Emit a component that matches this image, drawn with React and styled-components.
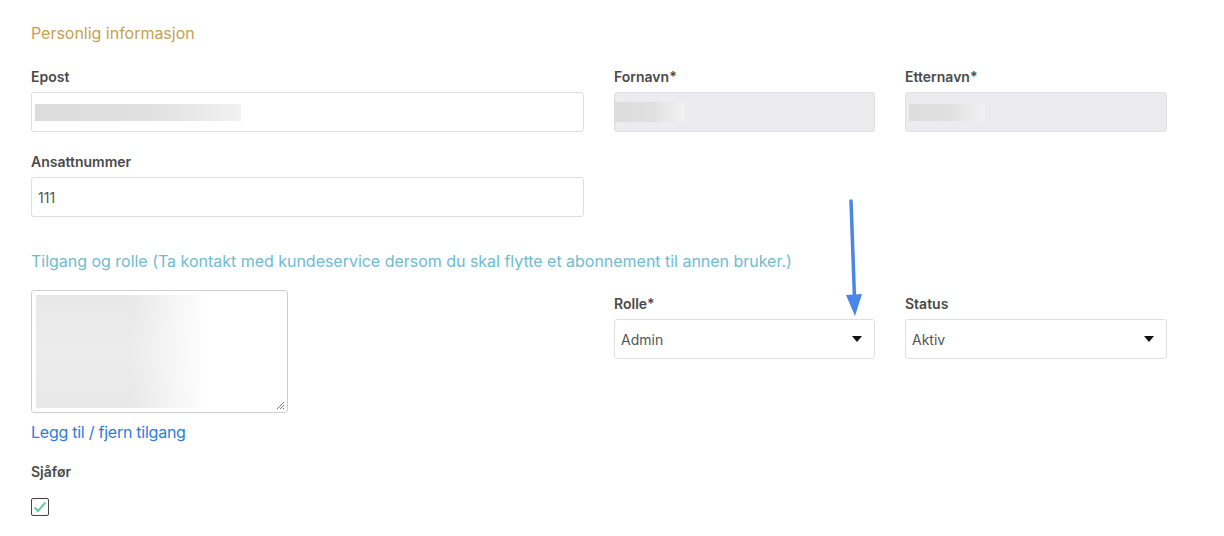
import React from "react";
import styled, { createGlobalStyle } from "styled-components";

const Global = createGlobalStyle`
  html, body { margin: 0; padding: 0; background: #fff; }
  body { font-family: Inter, "Noto Sans", "Liberation Sans", sans-serif; color: #444; }
  * { box-sizing: border-box; }
`;

const Page = styled.div`
  width: 1224px;
  height: 536px;
  padding: 0 16px;
  position: relative;
  overflow: hidden;
`;

const Row = styled.div`
  display: grid;
  grid-template-columns: 583px 291px 292px;
`;

const Col = styled.div`
  padding: 0 15px;
  grid-column: ${(p) => p.$span || "auto"};
`;

const SectionTitle = styled.h3`
  margin: 0;
  font-size: 16px;
  font-weight: 400;
  line-height: 20px;
  color: ${(p) => p.$color};
  padding: ${(p) => p.$pad};
  letter-spacing: -0.02px;
`;

const Field = styled.div`
  display: flex;
  flex-direction: column;
  align-items: stretch;
  padding-top: ${(p) => p.$top || 0}px;
`;

const Label = styled.label`
  font-size: 14px;
  font-weight: 600;
  line-height: 17px;
  color: #4a4a4a;
  margin-bottom: ${(p) => p.$mb ?? 7}px;
`;

const Input = styled.div`
  height: 40px;
  border: 1px solid #dfdfdf;
  border-radius: 3px;
  background: ${(p) => (p.$disabled ? "#ececee" : "#fff")};
  display: flex;
  align-items: center;
  padding: 0 6px;
  font-size: 14px;
  color: #555;
  position: relative;
`;

const Blur = styled.div`
  width: ${(p) => p.$w}px;
  height: ${(p) => p.$h}px;
  margin-left: ${(p) => p.$ml || 0}px;
  background: linear-gradient(90deg, #dcdcdc 0%, #e0e0e0 55%, #f2f2f2 100%);
`;

const SelectBox = styled(Input)`
  justify-content: space-between;
  padding: 0 12px 0 6px;
`;

const Caret = styled.span`
  width: 0;
  height: 0;
  border-left: 5px solid transparent;
  border-right: 5px solid transparent;
  border-top: 6px solid #111;
`;

const TextArea = styled.div`
  width: 257px;
  height: 123px;
  border: 1px solid #cfcfcf;
  border-radius: 3px;
  padding: 4px;
  position: relative;
  margin-top: 19px;
`;

const TextBlur = styled.div`
  width: 100%;
  height: 100%;
  background:
    linear-gradient(90deg, rgba(255,255,255,0) 0%, rgba(255,255,255,0) 38%, #fff 70%),
    linear-gradient(180deg, #e8e8e8 0%, #ececec 50%, #e8e8e8 100%);
`;

const Resize = styled.svg`
  position: absolute;
  right: 2px;
  bottom: 2px;
`;

const Link = styled.a`
  display: block;
  margin-top: 9px;
  font-size: 16px;
  line-height: 20px;
  letter-spacing: -0.25px;
  color: #2d7be0;
  text-decoration: none;
`;

const Checkbox = styled.div`
  width: 18px;
  height: 18px;
  border: 1px solid #444;
  border-radius: 2px;
  display: flex;
  align-items: center;
  justify-content: center;
`;

const Arrow = styled.svg`
  position: absolute;
  left: 840px;
  top: 198px;
`;

function Blurred({ w, h, ml }) {
  return <Blur $w={w} $h={h} $ml={ml} />;
}

export default function App() {
  return (
    <Page>
      <Global />
      <Row>
        <Col $span="1 / 4">
          <SectionTitle $color="#c8a04e" $pad="23px 0 0">Personlig informasjon</SectionTitle>
        </Col>
      </Row>
      <Row>
        <Col>
          <Field $top={25}>
            <Label>Epost</Label>
            <Input>
              <Blurred w={206} h={17} ml={-3} />
            </Input>
          </Field>
          <Field $top={21}>
            <Label>Ansattnummer</Label>
            <Input>111</Input>
          </Field>
        </Col>
        <Col>
          <Field $top={25}>
            <Label>Fornavn*</Label>
            <Input $disabled>
              <Blurred w={70} h={20} ml={-7} />
            </Input>
          </Field>
        </Col>
        <Col>
          <Field $top={25}>
            <Label>Etternavn*</Label>
            <Input $disabled>
              <Blurred w={76} h={17} ml={-3} />
            </Input>
          </Field>
        </Col>
      </Row>
      <Row>
        <Col $span="1 / 4">
          <SectionTitle $color="#6dbcd3" $pad="34px 0 0">
            Tilgang og rolle (Ta kontakt med kundeservice dersom du skal flytte et abonnement til annen bruker.)
          </SectionTitle>
        </Col>
      </Row>
      <Row>
        <Col>
          <TextArea>
            <TextBlur />
            <Resize width="9" height="9" viewBox="0 0 9 9">
              <path d="M8 1L1 8M8 4L4 8M8 7L7 8" stroke="#777" strokeWidth="1" />
            </Resize>
          </TextArea>
          <Link href="#">Legg til / fjern tilgang</Link>
          <Field $top={21}>
            <Label $mb={18}>Sjåfør</Label>
            <Checkbox>
              <svg width="14" height="12" viewBox="0 0 14 12">
                <path d="M1.5 6.5L5 10L12.5 1.5" fill="none" stroke="#5fcf9b" strokeWidth="2" />
              </svg>
            </Checkbox>
          </Field>
        </Col>
        <Col>
          <Field $top={24}>
            <Label>Rolle*</Label>
            <SelectBox>
              Admin
              <Caret />
            </SelectBox>
          </Field>
        </Col>
        <Col>
          <Field $top={24}>
            <Label>Status</Label>
            <SelectBox>
              Aktiv
              <Caret />
            </SelectBox>
          </Field>
        </Col>
      </Row>
      <Arrow width="30" height="122" viewBox="0 0 30 122">
        <path d="M11 3L14.5 100" stroke="#4a86e8" strokeWidth="3.5" strokeLinecap="round" fill="none" />
        <path d="M6 97L22 96L15 118Z" fill="#4a86e8" />
      </Arrow>
    </Page>
  );
}
